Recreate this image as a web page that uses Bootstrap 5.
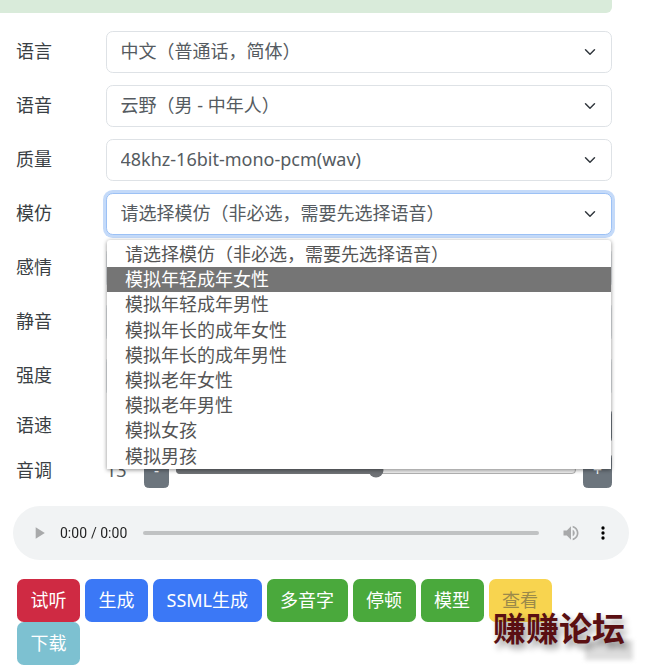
<!DOCTYPE html>
<html lang="zh-CN">
<head>
    <meta charset="UTF-8">
    <meta name="viewport" content="width=device-width, initial-scale=1.0">
    <title>语音合成</title>
    <link href="https://cdn.jsdelivr.net/npm/bootstrap@5.3.0/dist/css/bootstrap.min.css" rel="stylesheet">
    <style>
        html { font-size: 18px; overflow: hidden; }
        body { font-family: "Noto Sans", "Noto Sans CJK SC", sans-serif; color: #3a3f44; overflow: hidden; height: 668px; position: relative; }
        .page-wrap { width: 612px; }
        .top-alert { height: 12.5px; padding: 0; margin-bottom: 18px; background: #d9ebda; border: 0; border-radius: 0 0 6px 0; }
        .field-row { display: flex; align-items: center; margin-bottom: 11.5px; padding-left: 16px; }
        .field-row label { width: 90px; flex: none; }
        .field-row .form-select { color: #555b61; }
        .select-open { border-color: #9cc1f5; box-shadow: 0 0 0 3px #c4daf9; }
        .slider-row { margin-bottom: 10px; }
        .slider-row .range-val { width: 38px; flex: none; color: #555b61; }
        .slider-row input { flex: 1; margin: 0 6px; min-width: 0; accent-color: #6f7276; }
        .option-menu { position: absolute; left: 107px; top: 240px; width: 504px; background: #fff; box-shadow: 0 1px 4px rgba(0,0,0,.45); padding: 2px 0 0; margin: 0; list-style: none; border-radius: 3px 3px 0 0; }
        .option-menu li { height: 25.2px; line-height: 25px; padding-left: 18px; color: #555; white-space: nowrap; }
        .option-menu li.picked { background: #757575; color: #fff; }
        .audio-box { display: block; width: 616px; height: 61px; margin: 11px 0 19px 13px; }
        .btn-row { display: flex; flex-wrap: wrap; column-gap: 5px; padding-left: 17px; width: 600px; }
        .btn-row .btn { color: #fff; border: 0; height: 43px; padding-top: 0; padding-bottom: 0; }
        .btn-row .btn-danger { background: #cf2a43; }
        .btn-row .btn-primary { background: #3b78f6; }
        .btn-row .btn-success { background: #4aa93c; }
        .btn-row .btn-warning { background: #f8d44f; color: #9b8a4a; }
        .btn-row .btn-info { background: #7dc1d1; }
        .water-mark { position: absolute; left: 493px; top: 605px; font-family: "Noto Sans CJK SC", sans-serif; font-weight: 700; font-size: 33px; line-height: 44px; color: #5a0f12; text-shadow: 3px 5px 6px rgba(0,0,0,.4); white-space: nowrap; }
        .water-blur { position: absolute; top: 640px; height: 20px; background: #ddd; filter: blur(2px); }
    </style>
</head>
<body>
    <div class="page-wrap">
        <div class="alert alert-success top-alert"></div>

        <div class="field-row">
            <label>语言</label>
            <select class="form-select"><option>中文（普通话，简体）</option></select>
        </div>
        <div class="field-row">
            <label>语音</label>
            <select class="form-select"><option>云野（男 - 中年人）</option></select>
        </div>
        <div class="field-row">
            <label>质量</label>
            <select class="form-select"><option>48khz-16bit-mono-pcm(wav)</option></select>
        </div>
        <div class="field-row">
            <label>模仿</label>
            <select class="form-select select-open"><option>请选择模仿（非必选，需要先选择语音）</option></select>
        </div>
        <div class="field-row">
            <label>感情</label>
            <select class="form-select"></select>
        </div>
        <div class="field-row">
            <label>静音</label>
            <select class="form-select"></select>
        </div>
        <div class="field-row">
            <label>强度</label>
            <select class="form-select"></select>
        </div>
        <div class="field-row slider-row">
            <label>语速</label>
            <span class="range-val"></span>
            <button class="btn btn-secondary btn-sm">-</button>
            <input type="range" min="0" max="26" value="13">
            <button class="btn btn-secondary btn-sm">+</button>
        </div>
        <div class="field-row slider-row">
            <label>音调</label>
            <span class="range-val">13</span>
            <button class="btn btn-secondary btn-sm">-</button>
            <input type="range" min="0" max="26" value="13">
            <button class="btn btn-secondary btn-sm">+</button>
        </div>

        <audio class="audio-box" controls></audio>

        <div class="btn-row">
            <button class="btn btn-danger">试听</button>
            <button class="btn btn-primary">生成</button>
            <button class="btn btn-primary">SSML生成</button>
            <button class="btn btn-success">多音字</button>
            <button class="btn btn-success">停顿</button>
            <button class="btn btn-success">模型</button>
            <button class="btn btn-warning">查看</button>
            <button class="btn btn-info">下载</button>
        </div>
    </div>

    <ul class="option-menu">
        <li>请选择模仿（非必选，需要先选择语音）</li>
        <li class="picked">模拟年轻成年女性</li>
        <li>模拟年轻成年男性</li>
        <li>模拟年长的成年女性</li>
        <li>模拟年长的成年男性</li>
        <li>模拟老年女性</li>
        <li>模拟老年男性</li>
        <li>模拟女孩</li>
        <li>模拟男孩</li>
    </ul>

    <div class="water-blur" style="left:585px;width:48px"></div>
    <div class="water-mark">赚赚论坛</div>
</body>
</html>
